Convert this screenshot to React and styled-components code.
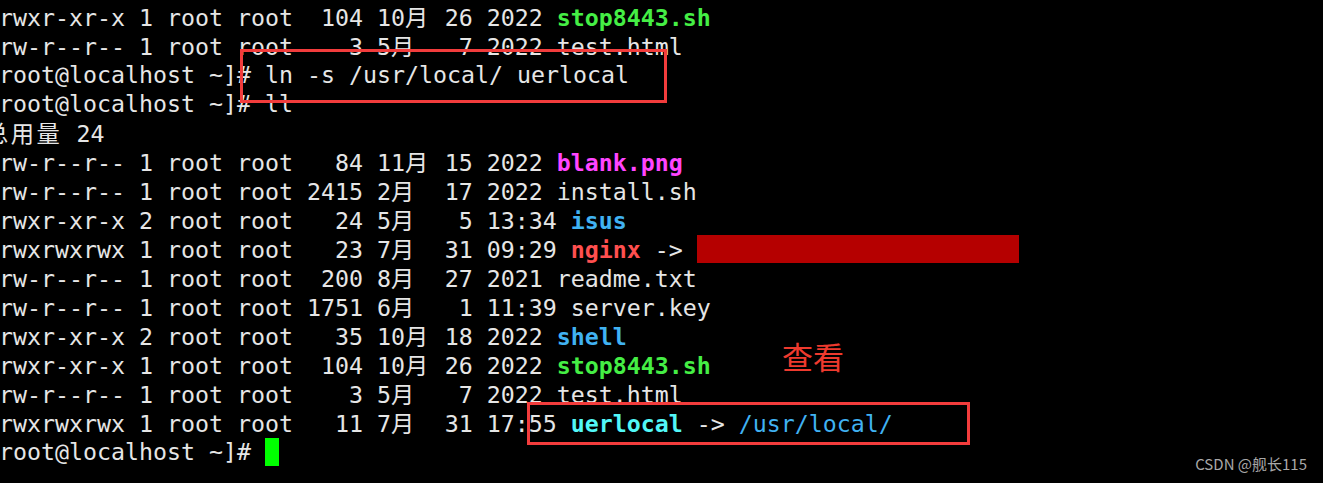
import React from 'react';
import styled, { createGlobalStyle } from 'styled-components';

const GlobalStyle = createGlobalStyle`
  html, body {
    margin: 0;
    padding: 0;
    background: #000;
    overflow: hidden;
  }
`;

const Screen = styled.div`
  position: relative;
  width: 1323px;
  height: 483px;
  overflow: hidden;
  background: #000;
`;

const Terminal = styled.div`
  font-family: "DejaVu Sans Mono", "Noto Sans CJK SC", monospace;
  font-size: 23.26px;
  color: #e6e6e6;
  padding-top: 2px;
  margin-left: calc(-1ch - 1px);
  white-space: pre;
`;

const Line = styled.div`
  height: 29px;
  line-height: 29px;
`;

const Wide = styled.span`
  display: inline-block;
  width: 2ch;
  font-family: "Noto Sans CJK SC", sans-serif;
  font-weight: 400;
`;

const Name = styled.span`
  color: ${(p) => p.$color};
  font-weight: ${(p) => (p.$bold ? 700 : 400)};
`;

const Redacted = styled.span`
  display: inline-block;
  vertical-align: top;
  width: 322px;
  height: 28px;
  margin-top: 1px;
  background: #b50000;
`;

const Cursor = styled.span`
  display: inline-block;
  vertical-align: top;
  width: 1ch;
  height: 28px;
  margin-top: 1px;
  background: #00ff00;
`;

const Mark = styled.div`
  position: absolute;
  left: ${(p) => p.$x}px;
  top: ${(p) => p.$y}px;
  width: ${(p) => p.$w}px;
  height: ${(p) => p.$h}px;
  border: 3px solid #f23c3c;
  box-sizing: border-box;
`;

const Note = styled.div`
  position: absolute;
  left: 782px;
  top: 335px;
  font-family: "Noto Sans CJK SC", sans-serif;
  font-size: 31px;
  line-height: 42px;
  color: #ee3a2e;
`;

const Watermark = styled.div`
  position: absolute;
  right: 16px;
  bottom: 9px;
  font-family: "Noto Sans CJK SC", "Noto Sans", sans-serif;
  font-size: 15px;
  color: #a8a8a8;
`;

const cjk = /[\u3000-\u9fff\uff00-\uffef]/;

// terminal cells: CJK glyphs take two columns
const Text = ({ children }) => {
  const parts = [];
  let buf = '';
  [...children].forEach((ch, i) => {
    if (cjk.test(ch)) {
      if (buf) parts.push(buf);
      buf = '';
      parts.push(<Wide key={i}>{ch}</Wide>);
    } else {
      buf += ch;
    }
  });
  if (buf) parts.push(buf);
  return <>{parts}</>;
};

const GREEN = '#45ee45';
const MAGENTA = '#ff45ff';
const BLUE = '#40b2f2';
const RED = '#ff4f4f';
const CYAN = '#52f7f7';

const App = () => {
  return (
    <Screen>
      <GlobalStyle />
      <Terminal>
        <Line>
          <Text>{'-rwxr-xr-x 1 root root  104 10月 26 2022 '}</Text>
          <Name $color={GREEN} $bold>stop8443.sh</Name>
        </Line>
        <Line>
          <Text>{'-rw-r--r-- 1 root root    3 5月   7 2022 test.html'}</Text>
        </Line>
        <Line>[root@localhost ~]# ln -s /usr/local/ uerlocal</Line>
        <Line>[root@localhost ~]# ll</Line>
        <Line>
          <Text>{'总用量 24'}</Text>
        </Line>
        <Line>
          <Text>{'-rw-r--r-- 1 root root   84 11月 15 2022 '}</Text>
          <Name $color={MAGENTA} $bold>blank.png</Name>
        </Line>
        <Line>
          <Text>{'-rw-r--r-- 1 root root 2415 2月  17 2022 install.sh'}</Text>
        </Line>
        <Line>
          <Text>{'drwxr-xr-x 2 root root   24 5月   5 13:34 '}</Text>
          <Name $color={BLUE} $bold>isus</Name>
        </Line>
        <Line>
          <Text>{'lrwxrwxrwx 1 root root   23 7月  31 09:29 '}</Text>
          <Name $color={RED} $bold>nginx</Name>
          {' -> '}
          <Redacted />
        </Line>
        <Line>
          <Text>{'-rw-r--r-- 1 root root  200 8月  27 2021 readme.txt'}</Text>
        </Line>
        <Line>
          <Text>{'-rw-r--r-- 1 root root 1751 6月   1 11:39 server.key'}</Text>
        </Line>
        <Line>
          <Text>{'drwxr-xr-x 2 root root   35 10月 18 2022 '}</Text>
          <Name $color={BLUE} $bold>shell</Name>
        </Line>
        <Line>
          <Text>{'-rwxr-xr-x 1 root root  104 10月 26 2022 '}</Text>
          <Name $color={GREEN} $bold>stop8443.sh</Name>
        </Line>
        <Line>
          <Text>{'-rw-r--r-- 1 root root    3 5月   7 2022 test.html'}</Text>
        </Line>
        <Line>
          <Text>{'lrwxrwxrwx 1 root root   11 7月  31 17:55 '}</Text>
          <Name $color={CYAN} $bold>uerlocal</Name>
          {' -> '}
          <Name $color={BLUE}>/usr/local/</Name>
        </Line>
        <Line>
          {'[root@localhost ~]# '}
          <Cursor />
        </Line>
      </Terminal>

      <Mark $x={240} $y={49} $w={427} $h={54} />
      <Mark $x={527} $y={402} $w={443} $h={43} />
      <Note>查看</Note>
      <Watermark>CSDN @舰长115</Watermark>
    </Screen>
  );
};

export default App;
